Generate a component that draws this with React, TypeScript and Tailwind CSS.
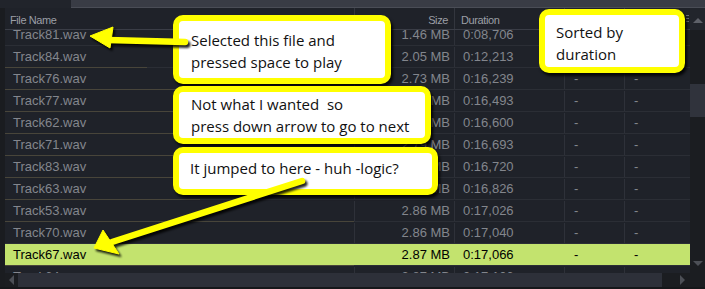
import React from 'react';

type Row = {
  name: string;
  size: string;
  dur: string;
  line: number; // width of the olive marker line in the name column
  selected?: boolean;
};

const rows: Row[] = [
  { name: 'Track81.wav', size: '1.46 MB', dur: '0:08,706', line: 349 },
  { name: 'Track84.wav', size: '2.05 MB', dur: '0:12,213', line: 0 },
  { name: 'Track76.wav', size: '2.73 MB', dur: '0:16,239', line: 142 },
  { name: 'Track77.wav', size: '2.75 MB', dur: '0:16,493', line: 349 },
  { name: 'Track62.wav', size: '2.77 MB', dur: '0:16,600', line: 349 },
  { name: 'Track71.wav', size: '2.79 MB', dur: '0:16,693', line: 349 },
  { name: 'Track83.wav', size: '2.80 MB', dur: '0:16,720', line: 349 },
  { name: 'Track63.wav', size: '2.82 MB', dur: '0:16,826', line: 349 },
  { name: 'Track53.wav', size: '2.86 MB', dur: '0:17,026', line: 195 },
  { name: 'Track70.wav', size: '2.86 MB', dur: '0:17,040', line: 349 },
  { name: 'Track67.wav', size: '2.87 MB', dur: '0:17,066', line: 198, selected: true },
  { name: 'Track64.wav', size: '2.87 MB', dur: '0:17,106', line: 349 },
];

const TableRow: React.FC<{ row: Row }> = ({ row }) => {
  const sel = row.selected;
  const text = sel ? 'text-black' : 'text-[#83868d]';
  const sep = sel ? 'border-transparent' : 'border-[#2e3139]';
  return (
    <div className={`h-[22px] shrink-0 flex flex-col ${sel ? 'bg-[#c3e36e]' : ''}`}>
      {/* separator line */}
      <div className="h-px flex shrink-0">
        <div className="h-px bg-[#48453a]" style={{ width: sel ? 0 : row.line }} />
        <div className="h-px flex-1 bg-[#2b2e35]" />
      </div>
      <div className={`flex-1 flex text-[13px] pt-[1px] ${text}`}>
        <div className="w-[349px] flex items-center pl-[8px]">{row.name}</div>
        <div className={`w-[100px] flex items-center justify-end pr-[4px] border-l ${sep}`}>{row.size}</div>
        <div className={`w-[110px] flex items-center pl-[8px] border-l ${sep}`}>{row.dur}</div>
        <div className={`w-[60px] flex items-center pl-[9px] border-l ${sep}`}>-</div>
        <div className={`flex-1 flex items-center pl-[9px] border-l ${sep}`}>-</div>
      </div>
    </div>
  );
};

const Callout: React.FC<{ className: string; children: React.ReactNode }> = ({ className, children }) => (
  <div
    className={`absolute border-[6px] border-[#ffff00] rounded-[10px] bg-white text-[15px] leading-[22px] text-[#111] shadow-[2px_3px_3px_rgba(0,0,0,0.85)] ${className}`}
    style={{ fontFamily: '"Open Sans", "Noto Sans", sans-serif' }}
  >
    {children}
  </div>
);

export default function App() {
  return (
    <div
      className="relative w-[705px] h-[289px] overflow-hidden bg-[#17191d] flex flex-col"
      style={{ fontFamily: '"Liberation Sans", Arial, sans-serif' }}
    >
      {/* top strip */}
      <div className="h-[8px] flex shrink-0">
        <div className="w-[71px] bg-[#21242b]" />
        <div className="flex-1 bg-[#393c45] border-b border-[#4a4d56]" />
      </div>

      <div className="h-[265px] flex shrink-0">
        <div className="w-[5px] bg-[#1a1c20]" />

        {/* table */}
        <div className="flex-1 flex flex-col bg-[#1f2229]">
          <div className="h-[22px] shrink-0 flex border-b border-[#3a3d46] text-[11px] tracking-[-0.4px] text-[#9c9fa6]">
            <div className="w-[349px] flex items-center pl-[5px] pt-[4px]">File Name</div>
            <div className="w-[100px] flex items-center justify-end pr-[6px] pt-[4px] border-l border-[#33363e]">Size</div>
            <div className="w-[110px] flex items-center pl-[6px] pt-[4px] border-l border-[#33363e]">Duration</div>
            <div className="w-[60px] border-l border-[#33363e]" />
            <div className="flex-1 border-l border-[#33363e] flex items-center justify-end pr-[1px]">
              <div className="flex flex-col gap-[2px]">
                <div className="w-[3px] h-px bg-[#6a6d74]" />
                <div className="w-[3px] h-px bg-[#6a6d74]" />
                <div className="w-[3px] h-px bg-[#6a6d74]" />
              </div>
            </div>
          </div>
          <div className="flex-1 overflow-hidden">
            <div className="flex flex-col mt-[-7px]">
              {rows.map((r) => (
                <TableRow key={r.name} row={r} />
              ))}
            </div>
          </div>
        </div>

        {/* vertical scrollbar */}
        <div className="w-[15px] flex flex-col bg-[#1b1d21]">
          <div className="h-[22px] bg-[#22252c] flex items-center justify-center pt-[2px]">
            <div className="w-0 h-0 border-l-[5px] border-r-[5px] border-b-[5px] border-l-transparent border-r-transparent border-b-[#5e6169]" />
          </div>
          <div className="h-[54px]" />
          <div className="h-[33px] bg-[#30333c]" />
          <div className="flex-1 flex items-end justify-center pb-[7px]">
            <div className="w-0 h-0 border-l-[5px] border-r-[5px] border-t-[5px] border-l-transparent border-r-transparent border-t-[#4c4f56]" />
          </div>
        </div>
      </div>

      {/* horizontal scrollbar */}
      <div className="h-[14px] flex shrink-0 bg-[#1b1d21]">
        <div className="w-[5px] bg-[#1a1c20]" />
        <div className="w-[13px] flex items-center justify-center">
          <div className="w-0 h-0 border-t-[5px] border-b-[5px] border-r-[5px] border-t-transparent border-b-transparent border-r-[#4c4f56]" />
        </div>
        <div className="w-[644px] bg-[#2d3039]" />
        <div className="flex-1 flex items-center justify-end pr-[20px]">
          <div className="w-0 h-0 border-t-[5px] border-b-[5px] border-l-[5px] border-t-transparent border-b-transparent border-l-[#4c4f56]" />
        </div>
      </div>
      <div className="flex-1 bg-[#15171a]" />

      {/* callouts */}
      <Callout className="left-[173px] top-[15px] w-[218px] h-[69px] pl-[12px] pt-[8px]">
        <div>Selected this file and</div>
        <div>pressed space to play</div>
      </Callout>
      <Callout className="left-[173px] top-[86px] w-[258px] h-[58px] pl-[12px] pt-[1px]">
        <div className="whitespace-pre">Not what I wanted  so</div>
        <div>press down arrow to go to next</div>
      </Callout>
      <Callout className="left-[173px] top-[147px] w-[265px] h-[48px] pl-[11px] pt-[4px]">
        <div>It jumped to here - huh -logic?</div>
      </Callout>
      <Callout className="left-[539px] top-[9px] w-[146px] h-[64px] pl-[11px] pt-[6px] leading-[21px]">
        <div>Sorted by</div>
        <div>duration</div>
      </Callout>

      {/* arrows */}
      <svg className="absolute left-0 top-0" width="705" height="289" viewBox="0 0 705 289">
        <defs>
          <filter id="sh" x="-10%" y="-10%" width="130%" height="130%">
            <feGaussianBlur stdDeviation="1.2" />
          </filter>
        </defs>
        <g transform="translate(2 2.5)" filter="url(#sh)" fill="#000" stroke="#000" opacity="0.85">
          <line x1="185" y1="42" x2="108" y2="40" strokeWidth="7" strokeLinecap="round" />
          <polygon points="90,36 113,27 110,48" strokeWidth="1" />
          <line x1="302" y1="181" x2="112" y2="242" strokeWidth="7" strokeLinecap="round" />
          <polygon points="94,248 103,230 119,254" strokeWidth="1" />
        </g>
        <g fill="#ffff00" stroke="#ffff00">
          <line x1="185" y1="42" x2="108" y2="40" strokeWidth="6.5" strokeLinecap="round" />
          <polygon points="90,36 113,27 110,48" strokeWidth="1" strokeLinejoin="round" />
          <line x1="302" y1="181" x2="112" y2="242" strokeWidth="6.5" strokeLinecap="round" />
          <polygon points="94,248 103,230 119,254" strokeWidth="1" strokeLinejoin="round" />
        </g>
      </svg>
    </div>
  );
}
